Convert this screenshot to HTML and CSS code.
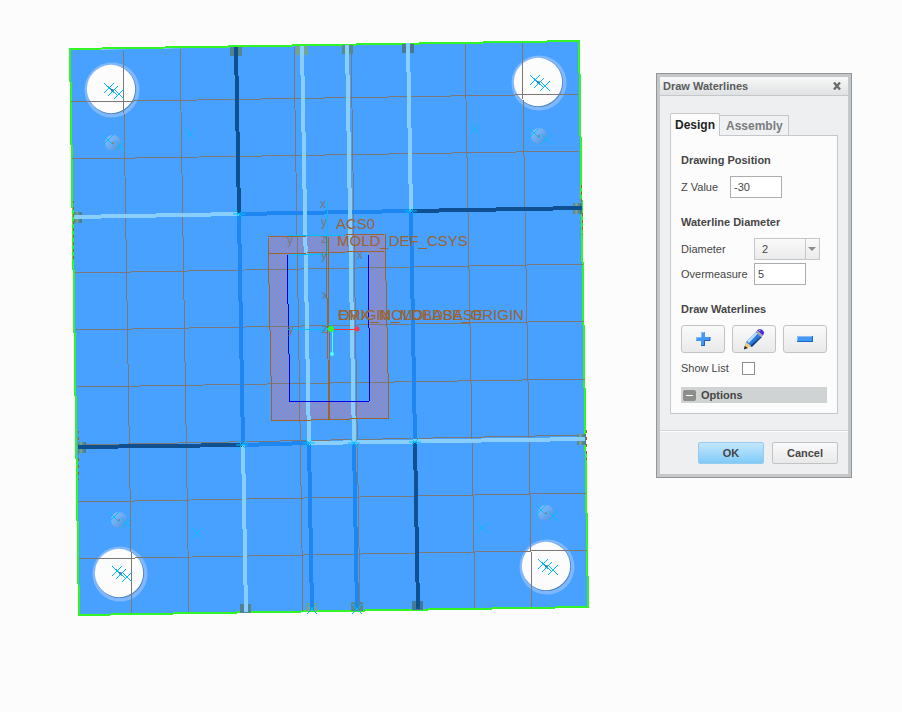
FILE: index.html
```html
<!DOCTYPE html>
<html lang="en">
<head>
    <meta charset="UTF-8">
    <meta name="viewport" content="width=device-width, initial-scale=1.0">
    <title>Draw Waterlines</title>
    <link rel="stylesheet" href="styles.css">
</head>
<body>
    <main class="workspace">
        <svg class="model" viewBox="0 0 902 712" preserveAspectRatio="xMinYMin meet" role="img" aria-label="Mold plate with waterlines">
            <defs>
                <pattern id="hatch" width="4" height="4" patternUnits="userSpaceOnUse">
                    <rect width="4" height="4" fill="#6a94e4"/>
                    <path d="M-1-1l6 6M-1 3l2 2M3-1l2 2" stroke="#a087b4" stroke-width="1.2"/>
                </pattern>
                <linearGradient id="port">
                    <stop offset="0" stop-color="#4f8290"/>
                    <stop offset="0.4" stop-color="#76a696"/>
                    <stop offset="0.6" stop-color="#5a8d88"/>
                    <stop offset="1" stop-color="#437995"/>
                </linearGradient>
                <linearGradient id="pin" x1="0" y1="0" x2="1" y2="1">
                    <stop offset="0" stop-color="#90c0f8"/>
                    <stop offset="0.5" stop-color="#6caaf0"/>
                    <stop offset="1" stop-color="#4a8ddb"/>
                </linearGradient>
                <g id="cross"><path d="M-5-5L5 5M-5 5L5-5"/></g>
                <g id="star"><path d="M-5-5L5 5M-5 5L5-5M-6 0H6"/></g>
                <g id="hole">
                    <circle cx="1" cy="1" r="27.500" fill="#80b8ff"/>
                    <circle cx="0.500" cy="0.500" r="24.500" fill="#4a80b8"/>
                    <circle r="24.200" fill="#fcfcfc"/>
                </g>
                <g id="hole-marks">
                    <use href="#cross" x="-3" y="-2"/>
                    <use href="#cross" x="1" y="1"/>
                    <use href="#cross" x="7" y="4"/>
                    <path d="M-1 0h3M0-1v3" stroke="#3c7090"/>
                </g>
                <g id="pin-marks">
                    <use href="#cross" x="-5" y="-3"/>
                    <use href="#cross" x="7" y="3"/>
                    <path d="M-1 0h2" stroke="#9a6030"/>
                </g>
            </defs>

            <!-- plate -->
            <path d="M70 50L579 41L588 607L79 615Z" fill="#48a0ff"/>
            <g class="crisp">
                <path class="edge" d="M70 49L579 41L588 607L79 615Z"/>
                <path d="M73 200L74 260M78 430L79 480M581 185L583 235M586 430L587 460" stroke="#a85a28" stroke-dasharray="3 4"/>
            </g>

            <use href="#hole" x="111" y="89"/>
            <use href="#hole" x="538" y="82"/>
            <use href="#hole" x="119" y="573"/>
            <use href="#hole" x="546" y="566"/>
            <g fill="url(#pin)">
                <circle cx="113" cy="143" r="8"/>
                <circle cx="539" cy="136" r="8"/>
                <circle cx="119" cy="520" r="8"/>
                <circle cx="546" cy="513" r="8"/>
            </g>

            <!-- core frame -->
            <path d="M269 236L385 234L389 418L272 421ZM287 254L290 402L370 401L368 252Z" fill="url(#hatch)" fill-rule="evenodd"/>

            <!-- grid -->
            <g class="crisp grid">
                <path d="M123 50L132 613M180 48L189 612M294 46L303 611M351 45L360 610M465 43L475 608M522 42L532 607"/>
                <path d="M71 102L579 94M72 159L580 151M75 273L584 264M76 330L585 321M77 387L586 379M77 445L586 435M78 502L587 493M79 559L588 550"/>
            </g>

            <!-- ports -->
            <g fill="url(#port)">
                <path d="M230 47h12v9h-12zM296 46h12v9h-12zM342 45h11v9h-11zM402 44h12v9h-12z"/>
                <path d="M240 604h11v9h-11zM306 603h11v8h-11zM351 602h12v9h-12zM412 601h11v9h-11z"/>
                <path d="M74 212h8v11h-8z"/>
                <path d="M78 442h8v11h-8z"/>
                <path d="M573 203h9v11h-9z"/>
                <path d="M577 434h9v11h-9z"/>
            </g>

            <!-- waterlines -->
            <g class="crisp pipe">
                <g stroke="#1e86f0">
                    <path d="M239 214L411 211M239 214L243 445M411 211L415 442M242 445L309 443M309 443L312 610M354 443L357 609"/>
                </g>
                <g stroke="#88ceff">
                    <path d="M74 217L239 214M302 46L309 443M347 45L354 443M408 43L411 211M309 443L585 439M243 445L246 612"/>
                </g>
                <g stroke="#0f5090">
                    <path d="M236 47L239 214M411 211L582 208M78 447L242 445M415 442L418 609"/>
                </g>
            </g>

            <!-- core outline -->
            <g class="crisp outline">
                <path d="M268 237L385 234L389 418L272 421ZM268 254L385 251M326 235L329 420M328 235L330 420"/>
                <path class="cavity" d="M287 254L290 402L370 401L368 253"/>
            </g>

            <!-- datum axes -->
            <g class="axis">
                <path class="crisp" d="M288 236L345 235M327 202V255M288 329H345M292 254H326"/>
                <use href="#star" x="239" y="214"/>
                <use href="#star" x="411" y="211"/>
                <use href="#star" x="242" y="445"/>
                <use href="#star" x="309" y="443"/>
                <use href="#star" x="354" y="443"/>
                <use href="#star" x="415" y="442"/>
                <use href="#cross" x="312" y="609"/>
                <use href="#cross" x="357" y="609"/>
                <use href="#cross" x="326" y="327"/>
                <use href="#cross" x="336" y="330"/>
                <use href="#cross" x="190" y="134"/>
                <use href="#cross" x="475" y="129"/>
                <use href="#cross" x="197" y="533"/>
                <use href="#cross" x="482" y="528"/>
                <use href="#hole-marks" x="112" y="90"/>
                <use href="#hole-marks" x="538" y="82"/>
                <use href="#hole-marks" x="120" y="573"/>
                <use href="#hole-marks" x="546" y="566"/>
                <use href="#pin-marks" x="113" y="143"/>
                <use href="#pin-marks" x="539" y="136"/>
                <use href="#pin-marks" x="119" y="520"/>
                <use href="#pin-marks" x="546" y="513"/>
            </g>
            <g class="axis-label">
                <text x="320" y="208">x</text>
                <text x="321" y="226">y</text>
                <text x="287" y="244">y</text>
                <text x="321" y="243">z</text>
                <text x="321" y="259">y</text>
                <text x="357" y="259">x</text>
                <text x="322" y="299">x</text>
                <text x="288" y="333">y</text>
                <text x="322" y="333">z</text>
            </g>
            <g class="csys-label">
                <text x="336" y="229">ACS0</text>
                <text x="337" y="246">MOLD_DEF_CSYS</text>
                <text x="338" y="320">EMX_MOLDBASE_ORIGIN</text>
                <text x="338" y="320">ORIGIN_MOLDBASE</text>
            </g>
            <g class="crisp">
                <path d="M332 329H356" stroke="#ff3232"/>
                <path d="M332 329V353" stroke="#50ffff"/>
            </g>
            <circle cx="331" cy="329" r="3" fill="#32f532"/>
            <circle cx="357" cy="329" r="2.500" fill="#f53c46"/>
            <circle cx="332" cy="354" r="2" fill="#50ffff"/>
        </svg>

        <form class="dialog" onsubmit="return false">
            <header class="dialog-title">
                <h1>Draw Waterlines</h1>
                <button type="button" class="close" aria-label="Close">
                    <svg width="8" height="8" viewBox="0 0 8 8"><path d="M1 0.5L7 7.5M7 0.5L1 7.5" stroke="#6a6c6e" stroke-width="2.4"/></svg>
                </button>
            </header>

            <div class="dialog-body">
                <div class="tabs" role="tablist">
                    <button type="button" class="tab active" role="tab" aria-selected="true">Design</button>
                    <button type="button" class="tab" role="tab" aria-selected="false">Assembly</button>
                </div>
                <div class="panel">
                    <section>
                        <h2>Drawing Position</h2>
                        <div class="position-row">
                            <label for="zvalue">Z Value</label>
                            <input type="text" id="zvalue" value="-30">
                        </div>
                    </section>
                    <section>
                        <h2>Waterline Diameter</h2>
                        <div class="diameter-grid">
                            <label for="diameter">Diameter</label>
                            <span class="select">
                                <select id="diameter">
                                    <option>2</option>
                                </select>
                            </span>
                            <label for="overmeasure">Overmeasure</label>
                            <input type="text" id="overmeasure" value="5">
                        </div>
                    </section>
                    <section>
                        <h2>Draw Waterlines</h2>
                        <div class="tools">
                            <button type="button" aria-label="Add">
                                <svg width="16" height="16" viewBox="0 0 16 16"><path d="M6 1h4v5h5v4h-5v5H6v-5H1V6h5z" fill="#4496f4"/><path d="M15 6V9.500H9.500V14.500H6" fill="none" stroke="#1a5fc0"/><path d="M6.500 6V1.500H9M1.500 9V6.500H6" fill="none" stroke="#8abcf4"/></svg>
                            </button>
                            <button type="button" aria-label="Edit">
                                <svg width="22" height="22" viewBox="0 0 22 22">
                                    <path d="M3 14L14 3L19 7L8 18L2 20Z" fill="#2878e0"/>
                                    <path d="M4 13L13 4L15 5.500L6 15Z" fill="#b4dcfc"/>
                                    <path d="M7 18L18 8L19 9L9 19Z" fill="#143c8c"/>
                                    <path d="M3 14L8 18L2 21Z" fill="#f8cc70"/>
                                    <path d="M1.500 18L5 20L1 21.500Z" fill="#282420"/>
                                    <path d="M13 4L15 1.500Q19 0 21 4Q21.500 6 19 8Z" fill="#4a30d8"/>
                                    <path d="M12.500 4L14.500 2.500L19.500 7L18 9Z" fill="#a8a8b8"/>
                                    <path d="M15.500 2Q17 1 18 2L16.500 3.500Z" fill="#a898fc"/>
                                </svg>
                            </button>
                            <button type="button" aria-label="Remove">
                                <svg width="16" height="6" viewBox="0 0 16 6"><path d="M0 0h16v6H0z" fill="#1c66c8"/><path d="M0 0h15v5H0z" fill="#8abcf4"/><path d="M1 1h14v4H1z" fill="#4496f4"/></svg>
                            </button>
                        </div>
                        <div class="show-list">
                            <label for="showlist">Show List</label>
                            <input type="checkbox" id="showlist">
                        </div>
                        <button type="button" class="options" aria-expanded="false">
                            <span class="collapse"></span>
                            Options
                        </button>
                    </section>
                </div>
            </div>

            <footer class="dialog-footer">
                <button type="submit" class="primary">OK</button>
                <button type="button">Cancel</button>
            </footer>
        </form>
    </main>
</body>
</html>
```

FILE: styles.css
```css
* {
    box-sizing: border-box;
}
body {
    margin: 0;
    background-color: #fcfcfc;
    font-family: "Liberation Sans", Arial, sans-serif;
    font-size: 11px;
    color: #464646;
}
button, input, select {
    font: inherit;
    color: inherit;
    margin: 0;
}
.workspace {
    position: relative;
    min-height: 100vh;
    overflow: hidden;
}

/* model view */
.model {
    display: block;
    width: 100%;
    height: 100vh;
}
.crisp {
    shape-rendering: crispEdges;
    fill: none;
}
.edge {
    stroke: #32f528;
    stroke-width: 2;
}
.grid {
    stroke: #7c7878;
}
.pipe {
    stroke-width: 4;
}
.outline {
    stroke: #9c6430;
}
.cavity {
    stroke: #0000e6;
}
.axis {
    stroke: #00beff;
    fill: none;
}
.axis-label {
    fill: #7c7878;
    font-size: 12px;
}
.csys-label {
    fill: #9c6430;
    font-size: 15px;
}

/* dialog */
.dialog {
    position: absolute;
    top: 73px;
    right: 50px;
    width: 196px;
    border: 1px solid #929698;
    background-color: #eeeff1;
    box-shadow: inset 0 0 0 3px #c4c8ca;
    padding: 3px;
}
.dialog-title {
    display: flex;
    align-items: center;
    justify-content: space-between;
    height: 19px;
    padding: 0 7px 0 3px;
    border-bottom: 1px solid #c4c8ca;
    background: linear-gradient(#f8f8f8, #dfe1e2);
}
.dialog-title h1 {
    margin: 0;
    font-size: 11px;
    color: #5a5c5e;
}
.close {
    display: flex;
    padding: 0;
    border: 0;
    background: none;
}
.dialog-body {
    padding: 17px 10px 16px;
}
.tabs {
    display: flex;
    align-items: flex-end;
}
.tab {
    height: 20px;
    padding: 0 5px 0 6px;
    border: 1px solid #c4c8ca;
    border-left: 0;
    border-bottom: 0;
    background-color: #f0f1f2;
    font-size: 12px;
    font-weight: bold;
    color: #7a7c80;
}
.tab.active {
    height: 23px;
    margin-bottom: -1px;
    padding: 0 4px;
    border-left: 1px solid #c4c8ca;
    border-radius: 2px 2px 0 0;
    background-color: #fcfcfc;
    color: #242424;
}
.panel {
    padding: 16px 10px 10px;
    border: 1px solid #c4c8ca;
    background-color: #fcfcfc;
}
.panel section + section {
    margin-top: 16px;
}
.panel h2 {
    margin: 0 0 8px;
    font-size: 11px;
    line-height: 16px;
}
.panel input[type="text"] {
    width: 52px;
    height: 22px;
    padding: 0 3px;
    border: 1px solid #aaaeb0;
    background-color: #fff;
}
.position-row {
    display: flex;
    align-items: center;
    gap: 12px;
}
.diameter-grid {
    display: grid;
    grid-template-columns: 70px 1fr;
    align-items: center;
    gap: 3px;
}
.select {
    position: relative;
    width: 66px;
    height: 22px;
}
.select select {
    appearance: none;
    width: 100%;
    height: 100%;
    padding: 0 20px 0 7px;
    border: 1px solid #c4c8ca;
    border-radius: 0;
    background: linear-gradient(#fafafa, #ebebeb);
}
.select::before {
    content: "";
    position: absolute;
    top: 1px;
    bottom: 1px;
    right: 14px;
    border-left: 1px solid #c4c8ca;
}
.select::after {
    content: "";
    position: absolute;
    top: 9px;
    right: 4px;
    border: 4px solid transparent;
    border-top-color: #8a8c8e;
    border-bottom: 0;
}
.tools {
    display: flex;
    gap: 7px;
}
.tools button {
    display: flex;
    align-items: center;
    justify-content: center;
    width: 44px;
    height: 28px;
    padding: 0;
    border: 1px solid #c0c4c6;
    border-radius: 3px;
    background: linear-gradient(#fafafa, #e9e9e9);
}
.show-list {
    display: flex;
    align-items: center;
    gap: 13px;
    height: 14px;
    margin-top: 8px;
}
.show-list input {
    appearance: none;
    width: 13px;
    height: 13px;
    border: 1px solid #8c8e90;
    background-color: #fff;
}
.options {
    display: flex;
    align-items: center;
    gap: 5px;
    width: 100%;
    height: 16px;
    margin-top: 12px;
    padding: 0 2px;
    border: 0;
    background-color: #d0d3d4;
    font-weight: bold;
}
.collapse {
    display: flex;
    align-items: center;
    justify-content: center;
    width: 13px;
    height: 11px;
    border-radius: 2px;
    background-color: #8c8e8c;
}
.collapse::before {
    content: "";
    width: 7px;
    height: 1px;
    background-color: #fff;
}
.dialog-footer {
    display: flex;
    justify-content: flex-end;
    gap: 8px;
    padding: 11px 10px 10px;
    border-top: 1px solid #d4d6d8;
    box-shadow: inset 0 1px 0 #fff;
}
.dialog-footer button {
    width: 66px;
    height: 22px;
    padding: 0;
    border: 1px solid #c0c4c6;
    border-radius: 2px;
    background: linear-gradient(#fafafa, #e9e9e9);
    font-weight: bold;
}
.dialog-footer .primary {
    border-color: #96ccee;
    background: linear-gradient(#c4e6fc, #80caf8);
}
```
